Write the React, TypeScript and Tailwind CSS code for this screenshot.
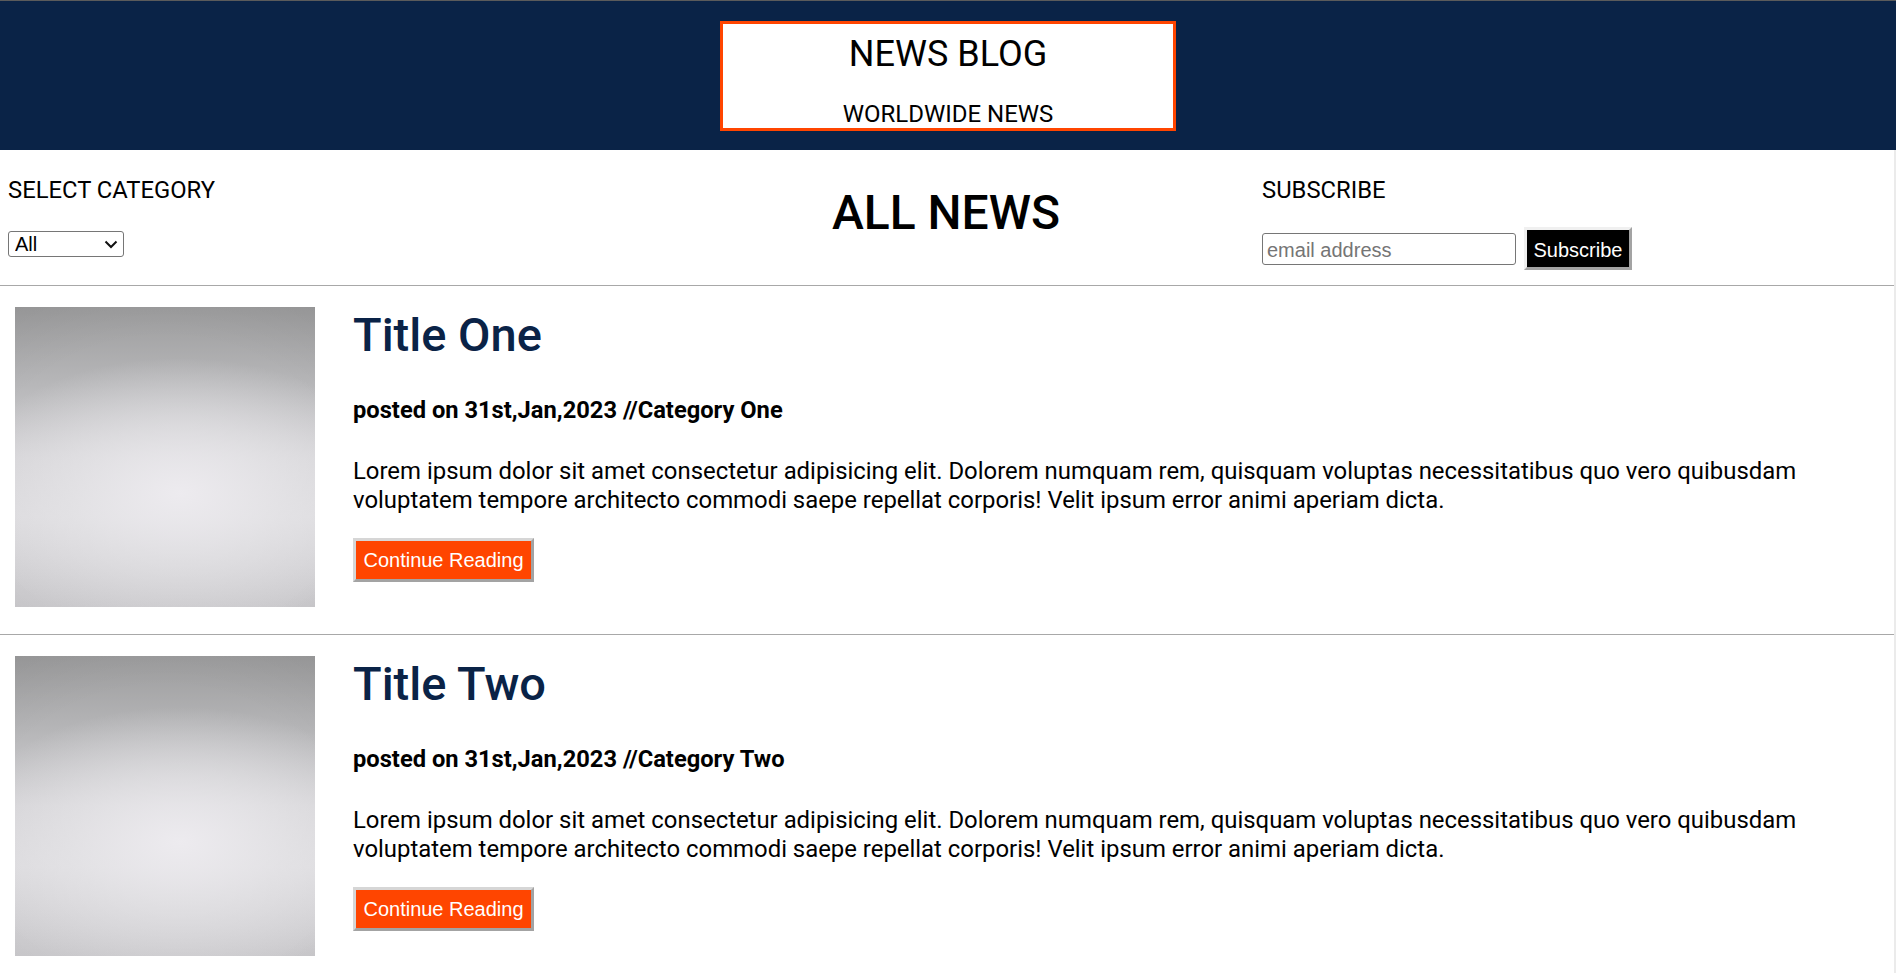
import React from "react";

const articles = [
  { title: "Title One", category: "Category One" },
  { title: "Title Two", category: "Category Two" },
];

const lorem =
  "Lorem ipsum dolor sit amet consectetur adipisicing elit. Dolorem numquam rem, quisquam voluptas necessitatibus quo vero quibusdam voluptatem tempore architecto commodi saepe repellat corporis! Velit ipsum error animi aperiam dicta.";

function Article({ title, category }: { title: string; category: string }) {
  return (
    <article className="flex items-start pl-[15px] pr-[15px] pt-[21px] pb-[27px] border-b border-[#a8a8a8]">
      <div className="w-[300px] h-[300px] shrink-0 bg-[radial-gradient(ellipse_75%_45%_at_55%_62%,rgba(238,236,240,0.95)_0%,rgba(232,231,234,0.6)_50%,rgba(225,224,227,0)_100%),radial-gradient(ellipse_110%_90%_at_50%_60%,rgba(0,0,0,0)_55%,rgba(0,0,0,0.08)_100%),linear-gradient(to_bottom,#9c9c9d_0%,#b6b6b8_25%,#d3d2d5_50%,#dad9dc_70%,#c9c8cb_100%)]" />
      <div className="ml-[38px] flex-1 flex flex-col items-start">
        <h2 className="text-[47px] leading-[56px] font-medium text-[#0a2347] [font-family:Roboto,sans-serif]">
          {title}
        </h2>
        <h3 className="mt-[34px] text-[23.7px] leading-[27px] font-bold text-black [font-family:Roboto,sans-serif]">
          posted on 31st,Jan,2023 //{category}
        </h3>
        <p className="mt-[33px] text-[23.9px] leading-[29px] text-black [font-family:Roboto,sans-serif]">
          {lorem}
        </p>
        <button className="mt-[23px] w-[181px] h-[44px] bg-[#ff4500] text-white text-[20px] [font-family:'Liberation_Sans',Arial,sans-serif] border-[3px] border-solid border-t-[#d6d6d6] border-l-[#d6d6d6] border-b-[#a3a3a3] border-r-[#a3a3a3]">
          Continue Reading
        </button>
      </div>
    </article>
  );
}

export default function App() {
  return (
    <div className="w-[1896px] min-h-screen bg-white [font-family:Roboto,sans-serif] text-black">
      <header className="border-t border-[#5b5b5b] bg-[#0a2347] pt-[20px] pb-[19px] flex justify-center">
        <div className="w-[456px] h-[110px] bg-white border-[3px] border-[#ff4500] flex flex-col items-center justify-between pt-[9px]">
          <h1 className="text-[36px] leading-[42px] font-normal">NEWS BLOG</h1>
          <p className="text-[24px] leading-[28px] font-normal">WORLDWIDE NEWS</p>
        </div>
      </header>
      <div className="border-r-2 border-[#ebebeb]">
        <nav className="h-[136px] flex border-b border-[#a8a8a8]">
          <div className="w-[632px] pl-[8px] pt-[27px] flex flex-col items-start">
            <h3 className="text-[23.8px] leading-[27px] font-normal">SELECT CATEGORY</h3>
            <div className="relative mt-[27px] w-[116px] h-[26px]">
              <select className="appearance-none w-[116px] h-[26px] border border-[#767676] rounded-[3px] pl-[6px] text-[20px] leading-[22px] bg-white text-black [font-family:'Liberation_Sans',Arial,sans-serif]">
                <option>All</option>
                <option>Category One</option>
                <option>Category Two</option>
              </select>
              <svg
                className="pointer-events-none absolute left-[96px] top-[9px]"
                width="14"
                height="9"
                viewBox="0 0 14 9"
                fill="none"
              >
                <path d="M1.5 1.5 L7 7 L12.5 1.5" stroke="#111" strokeWidth="2" />
              </svg>
            </div>
          </div>
          <div className="flex-1 flex justify-center pt-[35px]">
            <h1 className="text-[48px] leading-[56px] font-medium">ALL NEWS</h1>
          </div>
          <div className="w-[634px] pl-[2px] pt-[27px] flex flex-col items-start">
            <h3 className="text-[23.8px] leading-[27px] font-normal">SUBSCRIBE</h3>
            <div className="mt-[23px] flex items-center gap-[8px]">
              <input
                type="email"
                placeholder="email address"
                className="w-[254px] h-[32px] border border-[#767676] rounded-[3px] px-[4px] pt-[3px] text-[20px] placeholder:text-[#757575] [font-family:'Liberation_Sans',Arial,sans-serif]"
              />
              <button className="w-[108px] h-[43px] bg-black text-white text-[20px] pt-[2px] [font-family:'Liberation_Sans',Arial,sans-serif] border-[3px] border-solid border-t-[#f0f0f0] border-l-[#f0f0f0] border-b-[#a3a3a3] border-r-[#a3a3a3]">
                Subscribe
              </button>
            </div>
          </div>
        </nav>
        {articles.map((a) => (
          <Article key={a.title} title={a.title} category={a.category} />
        ))}
      </div>
    </div>
  );
}
